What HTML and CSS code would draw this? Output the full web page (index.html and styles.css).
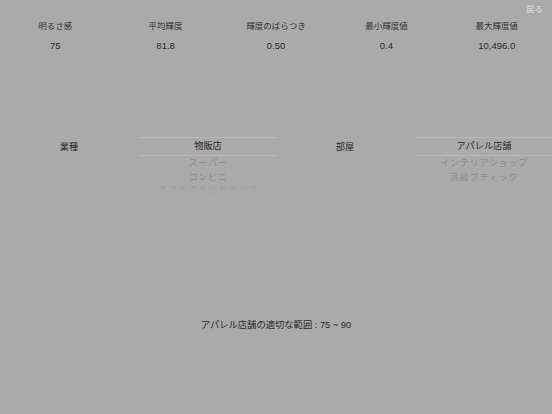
FILE: index.html
```
<!DOCTYPE html>
<html lang="ja">
<head>
<meta charset="utf-8">
<link rel="stylesheet" href="styles.css">
</head>
<body>
<div class="screen">
  <div class="topbar"><span class="back">戻る</span></div>
  <div class="metrics">
    <div class="metric"><div class="m-label">明るさ感</div><div class="m-value">75</div></div>
    <div class="metric"><div class="m-label">平均輝度</div><div class="m-value">81.8</div></div>
    <div class="metric"><div class="m-label">輝度のばらつき</div><div class="m-value">0.50</div></div>
    <div class="metric"><div class="m-label">最小輝度値</div><div class="m-value">0.4</div></div>
    <div class="metric"><div class="m-label">最大輝度値</div><div class="m-value">10,496.0</div></div>
  </div>
  <div class="pickers">
    <div class="p-label">業種</div>
    <div class="picker">
      <div class="sel">物販店</div>
      <div class="item i1">スーパー</div>
      <div class="item i2">コンビニ</div>
      <div class="item i3">オフィスエントランス</div>
      <div class="item i4">ショールーム</div>
    </div>
    <div class="p-label">部屋</div>
    <div class="picker">
      <div class="sel">アパレル店舗</div>
      <div class="item i1">インテリアショップ</div>
      <div class="item i2">高級ブティック</div>
    </div>
  </div>
  <div class="range">アパレル店舗の適切な範囲 : 75 ~ 90</div>
</div>
</body>
</html>
```
FILE: styles.css
```
html, body {
  margin: 0;
  padding: 0;
  background: #aaaaaa;
}
.screen {
  width: 552px;
  height: 414px;
  font-family: "Liberation Sans", "Noto Sans CJK JP", sans-serif;
  color: #2e2e2e;
  display: flex;
  flex-direction: column;
}
.topbar {
  height: 19px;
  display: flex;
  justify-content: flex-end;
  align-items: center;
  padding-right: 9px;
}
.back {
  font-size: 8.5px;
  color: #e0e0e0;
  line-height: 12px;
  margin-top: -2px;
}
.metrics {
  display: grid;
  grid-template-columns: repeat(5, 1fr);
}
.metric {
  display: flex;
  flex-direction: column;
  align-items: center;
  gap: 6px;
}
.m-label {
  font-size: 8.5px;
  line-height: 14px;
  color: #333;
}
.m-value {
  font-size: 9.5px;
  line-height: 14px;
  color: #2a2a2a;
}
.pickers {
  margin-top: 84px;
  display: grid;
  grid-template-columns: 138px 138px 138px 138px;
  align-items: start;
}
.p-label {
  font-size: 9.2px;
  line-height: 18px;
  margin-top: 1px;
  text-align: center;
  color: #2a2a2a;
}
.picker {
  display: flex;
  flex-direction: column;
  align-items: center;
  margin-left: 2px;
}
.sel {
  align-self: stretch;
  text-align: center;
  font-size: 9.2px;
  line-height: 17px;
  border-top: 1px solid #b9b9b9;
  border-bottom: 1px solid #b9b9b9;
  color: #2a2a2a;
}
.item {
  font-size: 9.2px;
  color: #8e8e8e;
  white-space: nowrap;
  letter-spacing: 0.6px;
}
.i1 {
  line-height: 14px;
}
.i2 {
  line-height: 15px;
  transform: scaleY(0.9);
}
.i3 {
  line-height: 6px;
  transform: scaleY(0.42);
  color: #989898;
  letter-spacing: 0.8px;
}
.i4 {
  line-height: 4px;
  transform: scaleY(0.2);
  color: #a0a0a0;
  font-size: 8px;
}
.range {
  margin-top: 123px;
  text-align: center;
  font-size: 9.3px;
  line-height: 14px;
  color: #2a2a2a;
}
```
